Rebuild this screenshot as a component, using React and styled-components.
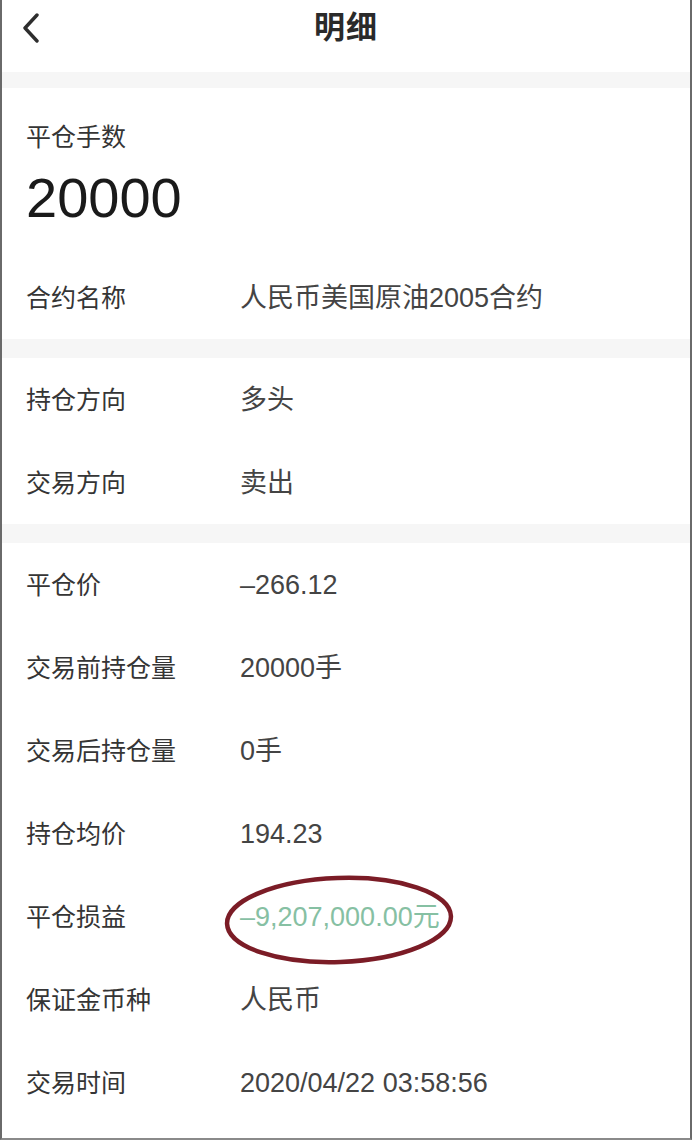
import React from 'react';
import styled, { createGlobalStyle } from 'styled-components';

const GlobalStyle = createGlobalStyle`
  html, body {
    margin: 0;
    padding: 0;
    background: #ffffff;
  }
  body {
    font-family: "Liberation Sans", "Noto Sans CJK SC", sans-serif;
    -webkit-font-smoothing: antialiased;
  }
`;

//Containers

const Page = styled.div`
  box-sizing: border-box;
  width: 692px;
  height: 1140px;
  border-left: 2px solid #6a6a6a;
  border-right: 2px solid #6a6a6a;
  border-bottom: 2px solid #8a8a8a;
  background: #fff;
  overflow: hidden;
  display: flex;
  flex-direction: column;
`;

const NavBar = styled.div`
  position: relative;
  height: 72px;
  display: flex;
  align-items: center;
  justify-content: center;
`;

const BackButton = styled.div`
  position: absolute;
  left: 18px;
  top: 12px;
  width: 22px;
  height: 32px;
  display: flex;
  align-items: center;
  justify-content: center;
`;

const NavTitle = styled.h1`
  margin: 0 0 16px;
  font-size: 31px;
  font-weight: 700;
  color: #2a2a2a;
  letter-spacing: 1px;
  line-height: 40px;
`;

const Band = styled.div`
  height: ${props => props.h || 18}px;
  background: #f6f6f6;
  flex-shrink: 0;
`;

const Section = styled.div`
  display: flex;
  flex-direction: column;
`;

const Summary = styled.div`
  display: flex;
  flex-direction: column;
  gap: 16px;
  padding: 34px 24px 28px 24px;
`;

const Label = styled.span`
  font-size: 25px;
  line-height: 30px;
  color: #353535;
  width: 214px;
  flex-shrink: 0;
`;

const BigNumber = styled.div`
  font-size: 56px;
  line-height: 60px;
  color: #1a1a1a;
`;

const Row = styled.div`
  position: relative;
  height: 83px;
  display: flex;
  align-items: center;
  padding: 0 24px;
`;

const Value = styled.span`
  font-size: 27px;
  line-height: 30px;
  color: ${props => props.color || '#444444'};
`;

const Circle = styled.svg`
  position: absolute;
  left: 220px;
  top: -2px;
  width: 234px;
  height: 94px;
  pointer-events: none;
`;

const Chevron = () => (
  <svg width="20" height="30" viewBox="0 0 20 30">
    <polyline points="16,2 4,15 16,28" fill="none" stroke="#2e2e2e" strokeWidth="3.4" strokeLinecap="round" strokeLinejoin="round" />
  </svg>
);

const rows2 = [
  ['持仓方向', '多头'],
  ['交易方向', '卖出'],
];

const rows3 = [
  ['平仓价', '–266.12'],
  ['交易前持仓量', '20000手'],
  ['交易后持仓量', '0手'],
  ['持仓均价', '194.23'],
  ['平仓损益', '–9,207,000.00元', true],
  ['保证金币种', '人民币'],
  ['交易时间', '2020/04/22 03:58:56'],
];

const DetailRow = ({ label, value, marked }) => (
  <Row>
    <Label>{label}</Label>
    <Value color={marked ? '#86c0a3' : undefined}>{value}</Value>
    {marked && (
      <Circle viewBox="0 0 234 94">
        <ellipse cx="117" cy="47" rx="112" ry="42" fill="none" stroke="#7b1c26" strokeWidth="4.5" transform="rotate(-2 117 47)" />
      </Circle>
    )}
  </Row>
);

const App = () => (
  <>
    <GlobalStyle />
    <Page>
      <NavBar>
        <BackButton><Chevron /></BackButton>
        <NavTitle>明细</NavTitle>
      </NavBar>
      <Band h={16} />
      <Section>
        <Summary>
          <Label>平仓手数</Label>
          <BigNumber>20000</BigNumber>
        </Summary>
        <DetailRow label="合约名称" value="人民币美国原油2005合约" />
      </Section>
      <Band h={19} />
      <Section>
        {rows2.map(([l, v]) => <DetailRow key={l} label={l} value={v} />)}
      </Section>
      <Band h={19} />
      <Section>
        {rows3.map(([l, v, m]) => <DetailRow key={l} label={l} value={v} marked={m} />)}
      </Section>
    </Page>
  </>
);

export default App;
